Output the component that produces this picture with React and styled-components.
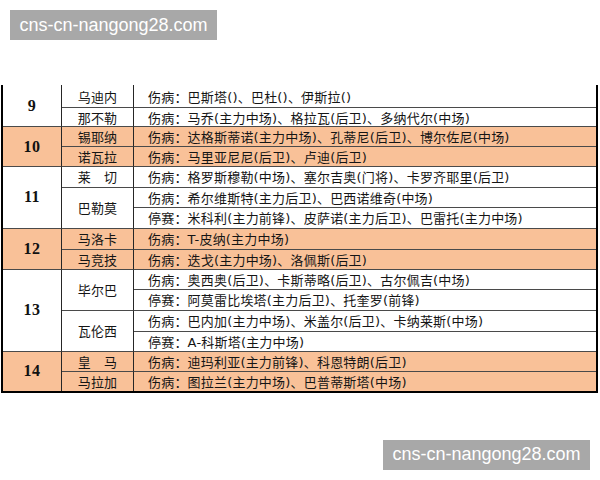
import React from 'react';
import styled, { createGlobalStyle } from 'styled-components';

const ORANGE = '#f9c198';
const LINE = '#4a4a4a';
const DIVIDER = '#262626';

const ROW_HEIGHTS = [23, 19, 20, 20, 20.5, 20, 21, 21, 20, 20, 21, 21, 20, 20, 19];

const groups = [
  {
    num: '9',
    teams: [
      { name: '乌迪内', lines: ['伤病：巴斯塔()、巴杜()、伊斯拉()'] },
      { name: '那不勒', lines: ['伤病：马乔(主力中场)、格拉瓦(后卫)、多纳代尔(中场)'] },
    ],
  },
  {
    num: '10',
    orange: true,
    teams: [
      { name: '锡耶纳', lines: ['伤病：达格斯蒂诺(主力中场)、孔蒂尼(后卫)、博尔佐尼(中场)'] },
      { name: '诺瓦拉', lines: ['伤病：马里亚尼尼(后卫)、卢迪(后卫)'] },
    ],
  },
  {
    num: '11',
    teams: [
      { name: '莱　切', lines: ['伤病：格罗斯穆勒(中场)、塞尔吉奥(门将)、卡罗齐耶里(后卫)'] },
      {
        name: '巴勒莫',
        lines: [
          '伤病：希尔维斯特(主力后卫)、巴西诺维奇(中场)',
          '停赛：米科利(主力前锋)、皮萨诺(主力后卫)、巴雷托(主力中场)',
        ],
      },
    ],
  },
  {
    num: '12',
    orange: true,
    teams: [
      { name: '马洛卡', lines: ['伤病：T-皮纳(主力中场)'] },
      { name: '马竞技', lines: ['伤病：迭戈(主力中场)、洛佩斯(后卫)'] },
    ],
  },
  {
    num: '13',
    teams: [
      {
        name: '毕尔巴',
        lines: [
          '伤病：奥西奥(后卫)、卡斯蒂略(后卫)、古尔佩吉(中场)',
          '停赛：阿莫雷比埃塔(主力后卫)、托奎罗(前锋)',
        ],
      },
      {
        name: '瓦伦西',
        lines: [
          '伤病：巴内加(主力中场)、米盖尔(后卫)、卡纳莱斯(中场)',
          '停赛：A-科斯塔(主力中场)',
        ],
      },
    ],
  },
  {
    num: '14',
    orange: true,
    teams: [
      { name: '皇　马', lines: ['伤病：迪玛利亚(主力前锋)、科恩特朗(后卫)'] },
      { name: '马拉加', lines: ['伤病：图拉兰(主力中场)、巴普蒂斯塔(中场)'] },
    ],
  },
];

const GlobalStyle = createGlobalStyle`
  html, body {
    margin: 0;
    padding: 0;
    background: #fff;
  }
`;

const Page = styled.div`
  width: 600px;
  height: 480px;
  display: flex;
  flex-direction: column;
  background: #fff;
  overflow: hidden;
`;

const Watermark = styled.div`
  align-self: ${(p) => (p.$end ? 'flex-end' : 'flex-start')};
  margin: ${(p) => (p.$end ? '47px 10px 0 0' : '10px 0 0 10px')};
  width: 207px;
  height: 30px;
  box-sizing: border-box;
  background: #a8a8a8;
  color: #fff;
  font-family: "Liberation Sans", Arial, sans-serif;
  font-size: 18px;
  display: flex;
  align-items: center;
  justify-content: center;
`;

const Table = styled.div`
  margin: 45px 2px 0 1px;
  display: grid;
  grid-template-columns: 59px 72px 1fr;
  grid-template-rows: ${(p) => p.$rows};
  border-left: 2px solid #000;
  border-right: 2px solid #000;
  border-bottom: 2px solid #000;
  font-family: "DejaVu Sans", "Noto Sans CJK SC", sans-serif;
  color: #151515;
`;

const Cell = styled.div`
  box-sizing: border-box;
  display: flex;
  align-items: center;
  min-width: 0;
  white-space: nowrap;
  overflow: hidden;
  background: ${(p) => (p.$orange ? ORANGE : '#fff')};
  border-bottom: ${(p) => (p.$last ? 'none' : `1px solid ${LINE}`)};
  grid-row: ${(p) => p.$row} / span ${(p) => p.$span || 1};
`;

const NumCell = styled(Cell)`
  grid-column: 1;
  justify-content: center;
  border-right: 1px solid ${DIVIDER};
  font-family: "Liberation Serif", "Times New Roman", serif;
  font-weight: bold;
  font-size: 16px;
  letter-spacing: 0.5px;
  color: #111;
`;

const TeamCell = styled(Cell)`
  grid-column: 2;
  justify-content: center;
  border-right: 1px solid ${DIVIDER};
  font-size: 13px;
  letter-spacing: 0.2px;
`;

const InfoCell = styled(Cell)`
  grid-column: 3;
  padding-left: 14px;
  font-size: 13px;
  letter-spacing: 0.2px;
`;

export default function App() {
  const totalRows = groups.reduce(
    (acc, g) => acc + g.teams.reduce((a, t) => a + t.lines.length, 0),
    0
  );
  const cells = [];
  let row = 1;
  groups.forEach((g, gi) => {
    const groupSpan = g.teams.reduce((a, t) => a + t.lines.length, 0);
    const groupEnd = row + groupSpan - 1;
    cells.push(
      <NumCell
        key={`n${gi}`}
        $row={row}
        $span={groupSpan}
        $orange={g.orange}
        $last={groupEnd === totalRows}
      >
        {g.num}
      </NumCell>
    );
    g.teams.forEach((t, ti) => {
      const teamEnd = row + t.lines.length - 1;
      cells.push(
        <TeamCell
          key={`t${gi}-${ti}`}
          $row={row}
          $span={t.lines.length}
          $orange={g.orange}
          $last={teamEnd === totalRows}
        >
          {t.name}
        </TeamCell>
      );
      t.lines.forEach((line, li) => {
        cells.push(
          <InfoCell
            key={`l${gi}-${ti}-${li}`}
            $row={row}
            $orange={g.orange}
            $last={row === totalRows}
          >
            {line}
          </InfoCell>
        );
        row += 1;
      });
    });
  });

  return (
    <>
      <GlobalStyle />
      <Page>
        <Watermark>cns-cn-nangong28.com</Watermark>
        <Table $rows={ROW_HEIGHTS.map((h) => `${h}px`).join(' ')}>{cells}</Table>
        <Watermark $end>cns-cn-nangong28.com</Watermark>
      </Page>
    </>
  );
}
